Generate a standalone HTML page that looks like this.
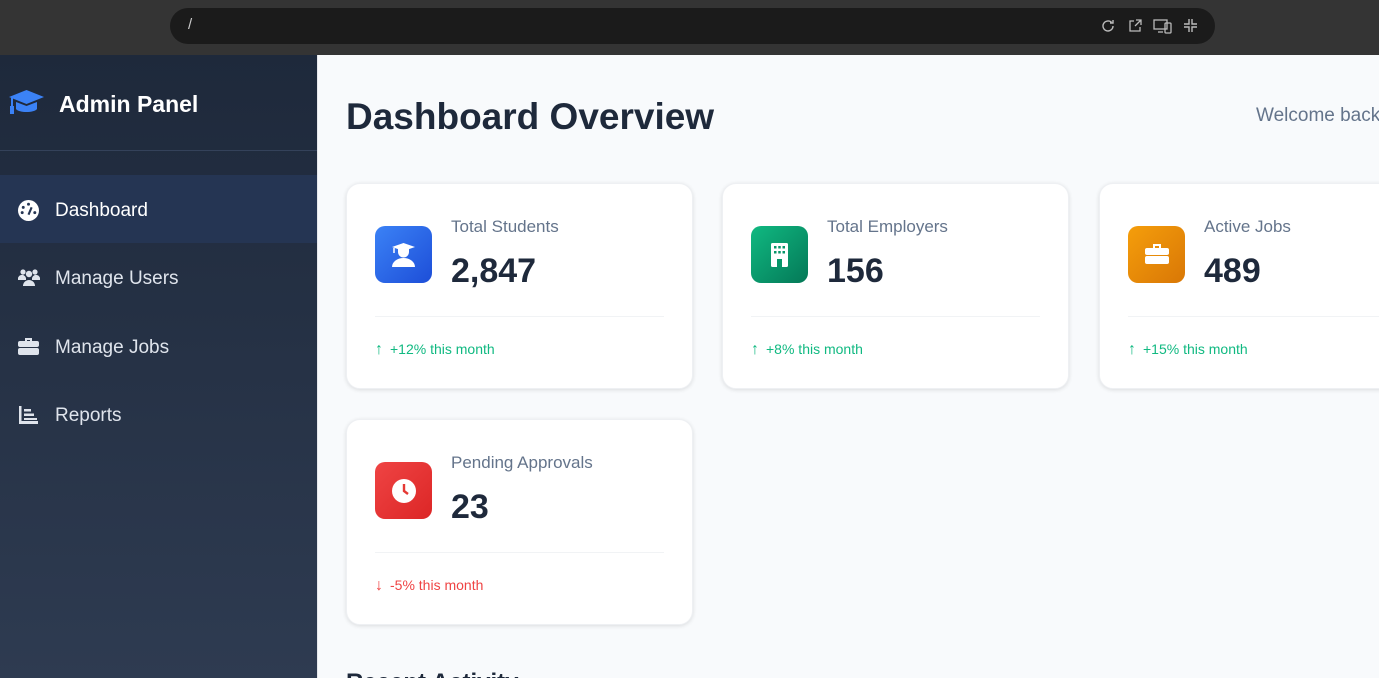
<!DOCTYPE html>
<html style="overflow:hidden;height:678px"><head><style>
*{margin:0;padding:0;box-sizing:border-box}
body{width:1379px;height:678px;overflow:hidden;font-family:"Liberation Sans",sans-serif;background:#f8fafc;position:relative}
.top{position:absolute;left:0;top:0;width:1379px;height:55px;background:#343434}
.url{position:absolute;left:170px;top:8px;width:1045px;height:36px;background:#1b1b1b;border-radius:18px;color:#ccc;font-size:15px}
.side{position:absolute;left:0;top:55px;width:318px;height:623px;background:linear-gradient(#1e293b,#2e3b51);border-right:1px solid #e5e7eb}
.brand{position:absolute;left:59px;top:36px;color:#fff;font-size:23px;font-weight:bold}
.hr{position:absolute;left:0;top:95px;width:317px;height:1px;background:#34425a}
.item{position:absolute;left:0;width:317px;height:68px;color:#dfe4ec;font-size:19px}
.item span{position:absolute;left:55px;top:25px}
.item svg{position:absolute;left:18px;top:25px}
.act{background:#253553;color:#fff}
h1{position:absolute;left:346px;top:96px;font-size:37px;color:#1e293b;font-weight:bold}
.wel{position:absolute;left:1256px;top:105px;font-size:19px;color:#64748b;white-space:nowrap}
.card{position:absolute;width:347px;height:206px;background:#fff;border-radius:14px;box-shadow:0 1px 4px rgba(0,0,0,.12);border:1px solid #eef0f3}
.ic{position:absolute;left:28px;top:42px;width:57px;height:57px;border-radius:10px}
.lab{position:absolute;left:104px;top:33px;font-size:17px;color:#64748b}
.num{position:absolute;left:104px;top:68px;font-size:34px;font-weight:bold;color:#1e293b}
.div{position:absolute;left:28px;right:28px;top:132px;height:1px;background:#f1f3f5}
.ft{position:absolute;left:28px;top:157px;font-size:14px;color:#10b981}
.ft b{margin-right:7px;font-size:16px}
.ic svg{position:absolute;left:17px;top:17px}
</style></head><body>
<div class="top"><div class="url"><span style="position:absolute;left:18px;top:8px">/</span>
<svg style="position:absolute;left:930px;top:10px" width="16" height="16" viewBox="0 0 16 16" fill="none" stroke="#bbb" stroke-width="1.4"><path d="M13 8a5 5 0 1 1-1.5-3.6M13 2v3h-3"/></svg>
<svg style="position:absolute;left:958px;top:10px" width="15" height="15" viewBox="0 0 15 15" fill="none" stroke="#bbb" stroke-width="1.3"><path d="M6 3H2v10h10V9M8 2h5v5M13 2L7 8"/></svg>
<svg style="position:absolute;left:983px;top:10px" width="20" height="16" viewBox="0 0 20 16" fill="none" stroke="#bbb" stroke-width="1.3"><rect x="1" y="2" width="13" height="9"/><rect x="12" y="5" width="6" height="10" rx="1"/><path d="M5 14h5"/></svg>
<svg style="position:absolute;left:1013px;top:10px" width="15" height="15" viewBox="0 0 15 15" fill="none" stroke="#bbb" stroke-width="1.4"><path d="M6 1v5H1M9 1v5h5M6 14V9H1M9 14V9h5"/></svg>
</div></div>
<div class="side">
<svg style="position:absolute;left:8px;top:34px" width="37" height="28" viewBox="0 0 37 28"><path d="M18.5 1L36 8 18.5 15 1 8z" fill="#3b82f6"/><path d="M8 13v7c3 4 18 4 21 0v-7l-10.5 4z" fill="#3b82f6"/><path d="M4 9v9" stroke="#3b82f6" stroke-width="2"/><rect x="2" y="17" width="4" height="8" fill="#3b82f6"/></svg>
<div class="brand">Admin Panel</div>
<div class="hr"></div>
<div class="item act" style="top:120px"><svg width="21" height="21" viewBox="0 0 20 20"><circle cx="10" cy="10" r="10" fill="#fff"/><circle cx="10" cy="4" r="1.4" fill="#253553"/><circle cx="5" cy="7" r="1.4" fill="#253553"/><circle cx="4" cy="12" r="1.4" fill="#253553"/><circle cx="16" cy="12" r="1.4" fill="#253553"/><path d="M10 14l3-7" stroke="#253553" stroke-width="2"/></svg><span>Dashboard</span></div>
<div class="item" style="top:188px"><svg width="22" height="20" viewBox="0 0 22 20" fill="#dfe4ec"><circle cx="5" cy="4" r="2.6"/><circle cx="17" cy="4" r="2.6"/><circle cx="11" cy="6" r="3.2"/><path d="M0 12a4 4 0 0 1 8-2v2zM22 12a4 4 0 0 0-8-2v2zM5 18a6 6 0 0 1 12 0z"/></svg><span>Manage Users</span></div>
<div class="item" style="top:257px"><svg width="21" height="19" viewBox="0 0 21 19" fill="#dfe4ec"><path d="M7 1h7v3h-2V3H9v1H7z"/><rect x="0" y="4" width="21" height="6" rx="2"/><rect x="0" y="11" width="21" height="7" rx="2"/></svg><span>Manage Jobs</span></div>
<div class="item" style="top:325px"><svg width="21" height="20" viewBox="0 0 21 20" fill="#dfe4ec"><path d="M1 1h2.5v15H20v3H1z"/><rect x="6" y="4" width="7" height="2.5"/><rect x="6" y="8.5" width="10" height="2.5"/><rect x="6" y="13" width="13" height="2" /></svg><span>Reports</span></div>
</div>
<h1>Dashboard Overview</h1>
<div class="wel">Welcome back,</div>

<div class="card" style="left:346px;top:183px"><div class="ic" style="background:linear-gradient(135deg,#3b82f6,#1d4ed8)"><svg width="23" height="24" viewBox="0 0 23 24" fill="#fff"><path d="M11.5 0L23 4l-11.5 4L0 4z"/><path d="M6 6h11v3a5.5 5.5 0 0 1-11 0z"/><path d="M2 5v5" stroke="#fff" stroke-width="1.5"/><path d="M0 24a11.5 9 0 0 1 23 0z"/></svg></div><div class="lab">Total Students</div><div class="num">2,847</div><div class="div"></div><div class="ft"><b>↑</b>+12% this month</div></div>

<div class="card" style="left:722px;top:183px"><div class="ic" style="background:linear-gradient(135deg,#10b981,#047857)"><svg width="23" height="24" viewBox="0 0 23 24"><rect x="3" y="0" width="17" height="24" rx="1.5" fill="#fff"/><g fill="#079669"><rect x="6" y="3" width="2.5" height="2.5"/><rect x="10.25" y="3" width="2.5" height="2.5"/><rect x="14.5" y="3" width="2.5" height="2.5"/><rect x="6" y="8" width="2.5" height="2.5"/><rect x="10.25" y="8" width="2.5" height="2.5"/><rect x="14.5" y="8" width="2.5" height="2.5"/><rect x="9" y="16" width="5" height="8"/></g></svg></div><div class="lab">Total Employers</div><div class="num">156</div><div class="div"></div><div class="ft"><b>↑</b>+8% this month</div></div>

<div class="card" style="left:1099px;top:183px"><div class="ic" style="background:linear-gradient(135deg,#f59e0b,#d97706)"><svg width="24" height="22" viewBox="0 0 24 22" fill="#fff"><path d="M8 1h8v4h-2V3h-4v2H8z"/><rect x="0" y="5" width="24" height="7" rx="2"/><rect x="0" y="13" width="24" height="8" rx="2"/></svg></div><div class="lab">Active Jobs</div><div class="num">489</div><div class="div"></div><div class="ft"><b>↑</b>+15% this month</div></div>

<div class="card" style="left:346px;top:419px"><div class="ic" style="background:linear-gradient(135deg,#ef4444,#dc2626)"><svg width="24" height="24" viewBox="0 0 24 24"><circle cx="12" cy="12" r="12" fill="#fff"/><path d="M12 5v7l4 3" stroke="#e53935" stroke-width="2.4" fill="none"/></svg></div><div class="lab">Pending Approvals</div><div class="num">23</div><div class="div"></div><div class="ft" style="color:#ef4444"><b>↓</b>-5% this month</div></div>

<div style="position:absolute;left:346px;top:669px;font-size:24px;font-weight:bold;color:#1e293b">Recent Activity</div>
</body></html>
